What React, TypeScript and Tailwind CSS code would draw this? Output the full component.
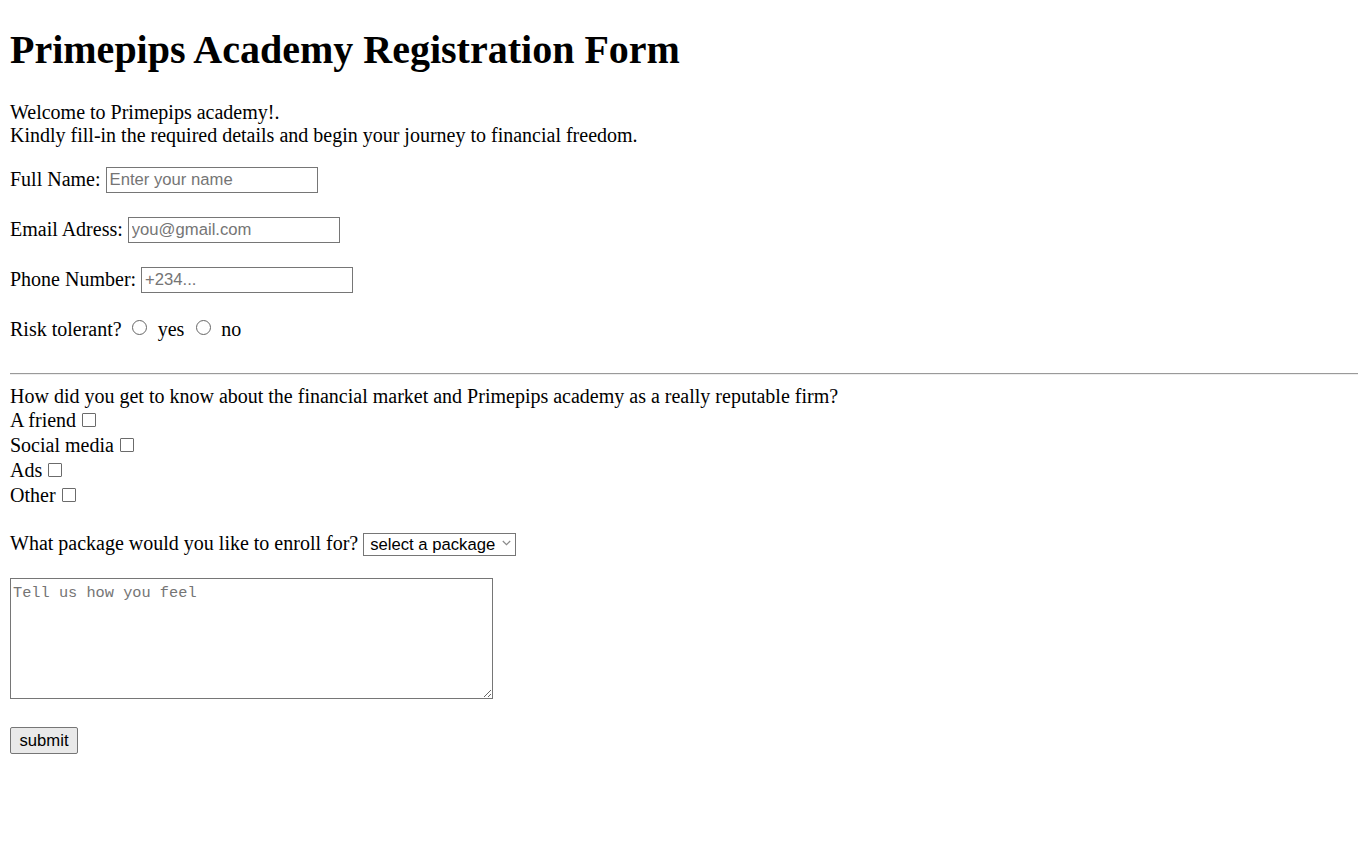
import React from 'react'

const serif = "font-['Liberation_Serif','Times_New_Roman',serif]"
const sans = "font-['Liberation_Sans',Arial,sans-serif]"

function TextField({ placeholder, type = 'text' }: { placeholder: string; type?: string }) {
  return (
    <input
      type={type}
      placeholder={placeholder}
      className={`${sans} w-[212px] h-[26px] border border-[#767676] bg-white px-[3px] text-[16.67px] text-black outline-none placeholder:text-[#757575]`}
    />
  )
}

function Radio({ name }: { name: string }) {
  return (
    <input
      type="radio"
      name={name}
      className="appearance-none w-[15px] h-[15px] rounded-full border border-[#666666] bg-white shrink-0"
    />
  )
}

function Check() {
  return (
    <input
      type="checkbox"
      className="appearance-none w-[14px] h-[14px] rounded-[1px] border border-[#6b6b6b] bg-white ml-[6px] mb-[2px] shrink-0"
    />
  )
}

export default function App() {
  const sources = ['A friend', 'Social media', 'Ads', 'Other']

  return (
    <div className={`${serif} min-h-[848px] bg-white px-[10px] pt-[27px] text-[20px] leading-[23px] text-black`}>
      <h1 className="text-[40px] font-bold leading-[46px]">Primepips Academy Registration Form</h1>

      <p className="mt-[28px] mb-[19px]">
        Welcome to Primepips academy!.
        <br />
        Kindly fill-in the required details and begin your journey to financial freedom.
      </p>

      <form onSubmit={(e) => e.preventDefault()}>
        <div className="flex items-center gap-[5px] h-[27px]">
          <label>Full Name:</label>
          <TextField placeholder="Enter your name" />
        </div>
        <div className="flex items-center gap-[5px] h-[27px] mt-[23px]">
          <label>Email Adress:</label>
          <TextField placeholder="you@gmail.com" type="email" />
        </div>
        <div className="flex items-center gap-[5px] h-[27px] mt-[23px]">
          <label>Phone Number:</label>
          <TextField placeholder="+234..." type="tel" />
        </div>
        <div className="flex items-center h-[27px] mt-[23px]">
          <span>Risk tolerant?</span>
          <span className="ml-[10px] mb-[4px] flex items-center">
            <Radio name="risk" />
          </span>
          <span className="ml-[11px]">yes</span>
          <span className="ml-[12px] mb-[4px] flex items-center">
            <Radio name="risk" />
          </span>
          <span className="ml-[10px]">no</span>
        </div>

        <hr className="mt-[30px] mb-[10px] h-[2px] border-0 border-t border-t-[#9a9a9a] border-b border-b-[#eeeeee]" />

        <p>How did you get to know about the financial market and Primepips academy as a really reputable firm?</p>
        {sources.map((s) => (
          <div key={s} className="flex items-center h-[25px]">
            <span>{s}</span>
            <Check />
          </div>
        ))}

        <div className="flex items-center gap-[5px] h-[25px] mt-[23px]">
          <span>What package would you like to enroll for?</span>
          <div className="relative">
            <select
              defaultValue=""
              className={`${sans} appearance-none w-[153px] h-[23px] border border-[#767676] bg-white pl-[6px] text-[16.67px] leading-[21px] text-black outline-none`}
            >
              <option value="">select a package</option>
              <option value="basic">Basic</option>
              <option value="premium">Premium</option>
              <option value="vip">VIP</option>
            </select>
            <svg
              className="pointer-events-none absolute right-[5px] top-[8px]"
              width="9"
              height="6"
              viewBox="0 0 9 6"
              fill="none"
            >
              <path d="M0.8 1 L4.5 4.6 L8.2 1" stroke="#8a8a8a" strokeWidth="1.2" />
            </svg>
          </div>
        </div>

        <textarea
          placeholder="Tell us how you feel"
          className="block mt-[22px] w-[483px] h-[121px] border border-[#767676] px-[2px] pt-[5px] pb-[3px] font-['Liberation_Mono','Courier_New',monospace] text-[15.3px] leading-[18px] text-black outline-none placeholder:text-[#757575]"
        />

        <button
          type="submit"
          className={`${sans} block mt-[28px] w-[68px] h-[27px] border border-[#767676] rounded-[2px] bg-[#e9e9e9] text-[16.67px] text-black`}
        >
          submit
        </button>
      </form>
    </div>
  )
}
